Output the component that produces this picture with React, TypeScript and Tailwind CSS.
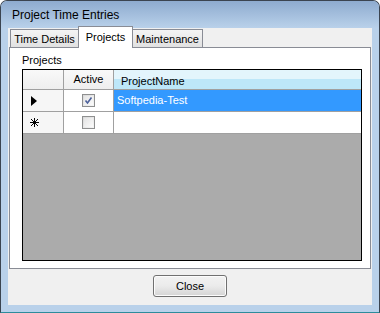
import { useState } from "react";

const ui = { fontFamily: '"Liberation Sans", Arial, sans-serif' };

function Tab({ label, active, width }: { label: string; active?: boolean; width: string }) {
  if (active) {
    return (
      <div
        className={`relative z-10 -mx-[1px] h-[22px] ${width} flex items-center justify-center border border-b-0 border-[#898c95] bg-white text-[11px] text-black`}
      >
        <span className="-mt-[1px]">{label}</span>
      </div>
    );
  }
  return (
    <div
      className={`h-[19px] ${width} flex items-center justify-center border border-b-0 border-[#898c95] bg-gradient-to-b from-[#f4f4f4] to-[#e0e0e0] text-[11px] text-black`}
    >
      {label}
    </div>
  );
}

function CheckBox({ checked }: { checked?: boolean }) {
  return (
    <div className="w-[13px] h-[13px] border border-[#8e8f8f] bg-gradient-to-br from-[#d8d8d8] to-[#f6f6f6] p-[1px]">
      <div className="w-full h-full bg-gradient-to-br from-[#e4e4e4] to-[#fbfbfb] flex items-center justify-center">
        {checked && (
          <svg width="9" height="9" viewBox="0 0 9 9">
            <path d="M1.5 4.5 L3.5 7 L7.5 1.5" fill="none" stroke="#4c619b" strokeWidth="1.6" />
          </svg>
        )}
      </div>
    </div>
  );
}

export default function App() {
  const [tab] = useState("Projects");

  return (
    <div className="w-[380px] h-[313px] bg-white" style={ui}>
      <div className="w-[380px] h-[313px] flex flex-col border border-[#3b4450] border-b-[#2d8c9c] rounded-t-[7px] bg-[#b9d1ea] overflow-hidden">
        {/* title bar */}
        <div className="h-[27px] shrink-0 flex items-center pl-[11px] pt-[1px] bg-gradient-to-b from-[#8eabcf] to-[#b9d1ea]">
          <span className="text-[12px] text-black">Project Time Entries</span>
        </div>

        {/* client area */}
        <div className="mx-[7px] mb-[7px] flex-1 flex flex-col bg-[#f0f0f0]">
          {/* tabs */}
          <div className="h-[20px] flex items-end pl-[2px]">
            <Tab label="Time Details" width="w-[69px]" active={tab === "Time Details"} />
            <Tab label="Projects" width="w-[55px]" active={tab === "Projects"} />
            <Tab label="Maintenance" width="w-[71px]" active={tab === "Maintenance"} />
          </div>

          {/* tab page */}
          <div className="ml-[1px] mr-[1px] -mt-[1px] h-[222px] border border-[#898c95] bg-white pt-[6px] pl-[12px] pr-[10px]">
            <div className="text-[11px] text-black leading-[13px]">Projects</div>

            {/* data grid */}
            <div className="mt-[2px] w-[340px] h-[192px] border border-black bg-[#ababab] flex flex-col text-[11px]">
              {/* header */}
              <div className="h-[20px] flex border-b border-[#a0a0a0] bg-gradient-to-b from-[#f9f9f9] to-[#eeeeee]">
                <div className="w-[41px] border-r border-[#a0a0a0]" />
                <div className="w-[50px] border-r border-[#a0a0a0] flex items-center justify-center">Active</div>
                <div className="flex-1 flex flex-col relative">
                  <div className="h-[9px] bg-[#e3f5fc]" />
                  <div className="flex-1 bg-[#bde7f9]" />
                  <span className="absolute left-[7px] top-[3px]">ProjectName</span>
                </div>
              </div>

              {/* row 1 */}
              <div className="h-[22px] flex border-b border-[#a0a0a0] bg-white">
                <div className="w-[41px] border-r border-[#a0a0a0] bg-[#f6f6f6] flex items-center pl-[8px]">
                  <svg width="6" height="10" viewBox="0 0 6 10">
                    <path d="M0 0 L6 5 L0 10 Z" fill="#000" />
                  </svg>
                </div>
                <div className="w-[50px] border-r border-[#a0a0a0] flex items-center justify-center">
                  <CheckBox checked />
                </div>
                <div className="flex-1 bg-[#3399ff] text-white flex items-center pl-[3px]">Softpedia-Test</div>
              </div>

              {/* new row */}
              <div className="h-[22px] flex border-b border-[#a0a0a0] bg-white">
                <div className="w-[41px] border-r border-[#a0a0a0] bg-[#f6f6f6] flex items-center pl-[7px]">
                  <svg width="9" height="9" viewBox="0 0 9 9" shapeRendering="crispEdges">
                    <path d="M4.5 0 V9 M0 4.5 H9 M1 1 L8 8 M8 1 L1 8" stroke="#000" strokeWidth="1" fill="none" />
                  </svg>
                </div>
                <div className="w-[50px] border-r border-[#a0a0a0] flex items-center justify-center">
                  <CheckBox />
                </div>
                <div className="flex-1" />
              </div>
            </div>
          </div>

          {/* buttons */}
          <div className="flex-1 flex justify-center pt-[6px]">
            <button className="w-[74px] h-[22px] rounded-[3px] border border-[#707070] bg-gradient-to-b from-[#f2f2f2] via-[#ebebeb] to-[#d4d4d4] text-[11px] text-black shadow-[inset_0_0_0_1px_#fcfcfc]">
              Close
            </button>
          </div>
        </div>
      </div>
    </div>
  );
}
